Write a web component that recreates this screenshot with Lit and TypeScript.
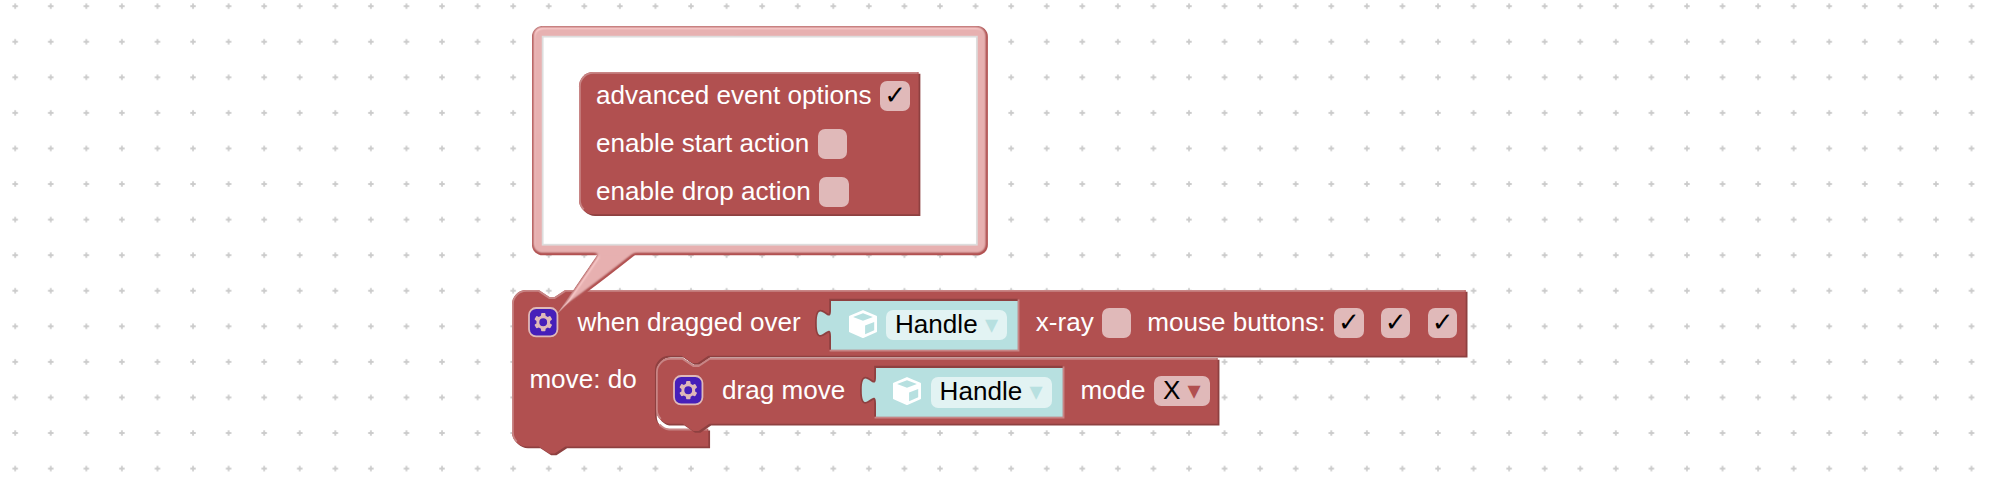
import { LitElement, html, css } from "lit";
import { customElement, property } from "lit/decorators.js";

const SCALE = 1.778;
const MAIN = "#b15050";
const DARK = "#8e4040";
const LIGHT = "#c88585";
const TAB = "c 0,-10 -8,8 -8,-7.5 s 8,2.5 8,-7.5";

const GEAR =
  "m4.203,7.296 0,1.368 -0.92,0.677 -0.11,0.41 0.9,1.559 0.41,0.11 1.043,-0.457 1.187,0.683 0.127,1.134 0.3,0.3 1.8,0 0.3,-0.299 0.127,-1.138 1.185,-0.682 1.046,0.458 0.409,-0.11 0.9,-1.559 -0.11,-0.41 -0.92,-0.677 0,-1.366 0.92,-0.677 0.11,-0.41 -0.9,-1.559 -0.409,-0.109 -1.046,0.458 -1.185,-0.682 -0.127,-1.138 -0.3,-0.299 -1.8,0 -0.3,0.3 -0.126,1.135 -1.187,0.682 -1.043,-0.457 -0.41,0.11 -0.899,1.559 0.108,0.409z";

@customElement("block-outline")
class BlockOutline extends LitElement {
  @property() path = "";
  @property() light = "";
  static styles = css`
    :host { position: absolute; inset: 0; }
    svg { display: block; overflow: visible; width: 1px; height: 1px; }
  `;
  render() {
    return html`<svg>
      <g transform="scale(${SCALE})">
        <path d=${this.path} fill=${DARK} transform="translate(1,1)"></path>
        <path d=${this.path} fill=${MAIN}></path>
        <path d=${this.light} fill="none" stroke=${LIGHT} stroke-width="1"></path>
      </g>
    </svg>`;
  }
}

@customElement("gear-icon")
class GearIcon extends LitElement {
  static styles = css`
    :host { display: block; width: 28.45px; height: 28.45px; flex: none; }
    svg { display: block; width: 100%; height: 100%; overflow: visible; opacity: 0.6; }
  `;
  render() {
    return html`<svg viewBox="0 0 16 16">
      <rect width="16" height="16" rx="4" fill="#00f" stroke="#fff"></rect>
      <path d=${GEAR} fill="#fff"></path>
      <circle cx="8" cy="8" r="2.7" fill="#00f" stroke="#fff"></circle>
    </svg>`;
  }
}

@customElement("check-field")
class CheckField extends LitElement {
  @property({ type: Boolean }) on = false;
  static styles = css`
    :host {
      display: block; flex: none; box-sizing: border-box;
      width: 29.4px; height: 30.3px; border-radius: 7.1px;
      background: rgba(255, 255, 255, 0.6); color: #000;
      text-align: center; font: 26.08px/28px "Liberation Sans", "DejaVu Sans", sans-serif;
    }
  `;
  render() {
    return html`${this.on ? "✓" : ""}`;
  }
}

@customElement("mesh-block")
class MeshBlock extends LitElement {
  static styles = css`
    :host { display: block; position: relative; flex: none; width: 187.4px; height: 48.8px; white-space: normal; }
    .shape { position: absolute; left: 0; top: 0; width: 1px; height: 1px; overflow: visible; }
    .row { position: relative; display: flex; padding: 9.2px 0 0 17.8px; }
    .cube { width: 28px; height: 28px; flex: none; margin-right: 9.2px; overflow: visible; }
    .field {
      display: flex; box-sizing: border-box; width: 121px; height: 30.3px; padding-left: 9px;
      border-radius: 7.1px; background: rgba(255, 255, 255, 0.6); color: #000;
      font: 26.08px/29.6px "Liberation Sans", "DejaVu Sans", sans-serif;
      white-space: pre;
    }
    .arrow { color: #b7e0e0; }
  `;
  render() {
    return html`
      <svg class="shape">
        <g transform="scale(${SCALE})">
          <path d="M 105,-0.2 H 0 V 5 c 0,10 -8,-8 -8,7.5 s 8,-2.5 8,7.5 V 27.4" fill="none" stroke=${DARK} stroke-width="2"></path>
          <path d="M 105.5,-0.8 V 27.9 H -0.8" fill="none" stroke=${LIGHT} stroke-width="1"></path>
          <path d="M 0,0 H 105 V 27.4 H 0 V 20 ${TAB} z" fill="#b7e0e0"></path>
        </g>
      </svg>
      <div class="row">
        <svg class="cube" viewBox="0 0 28 28">
          <path fill="#fff" stroke="#fff" stroke-width="2" stroke-linejoin="round" d="M14,1.1 L27,6.7 V21.4 L14,27 L1,21.4 V6.7 Z"></path>
          <path fill="#b7e0e0" d="M14,3.2 L23.9,6.9 L14,10.8 L4.1,6.9 Z M25.2,12 V20.2 L16.1,24.2 V15.6 Z"></path>
        </svg>
        <div class="field">Handle <span class="arrow">▾</span></div>
      </div>`;
  }
}

@customElement("app-root")
class AppRoot extends LitElement {
  static styles = css`
    :host {
      display: block; position: relative; width: 2000px; height: 484px; overflow: hidden;
      background: #fff; color: #fff; font: 26.08px/29px "Liberation Sans", "DejaVu Sans", sans-serif;
    }
    .layer { position: absolute; left: 0; top: 0; width: 2000px; height: 484px; }
    .block { position: absolute; }
    .event { left: 512px; top: 290.4px; width: 956px; }
    .drag { left: 656.4px; top: 358px; width: 564px; }
    .options { left: 578.7px; top: 72.4px; width: 342px; }
    .row { position: relative; display: flex; align-items: flex-start; white-space: pre; }
    .event .row { padding: 17.6px 0 0 17.4px; }
    .drag .row { padding: 17.6px 0 0 17.6px; }
    .event .row.statement { padding: 15.6px 0 0 17.4px; }
    .options .row { height: 48px; box-sizing: border-box; padding: 8.6px 0 0 17.4px; }
    .label { margin-top: -0.2px; flex: none; }
    .drag .label { margin-top: 0.2px; }
    .row .when { margin-left: 19.6px; width: 234.8px; }
    .row .dragmove { margin-left: 19.6px; width: 134.8px; }
    .row mesh-block { margin: -7.4px 17.4px 0 18.8px; }
    .xray { width: 66px; }
    .mouse { margin-left: 16px; width: 187px; }
    .next { margin-left: 17.5px; }
    .mode { width: 73.5px; }
    .drop {
      display: flex; box-sizing: border-box; width: 56px; height: 30.3px; padding-left: 9px;
      background: rgba(255, 255, 255, 0.6); border-radius: 7.1px; color: #000; line-height: 29.4px;
    }
    .tri { color: #b15050; }
    .options check-field { margin-left: 8.8px; }
  `;

  render() {
    const s = 80.4;
    const eventPath = `M 0,8 A 8,8 0 0,1 8,0 H 15 l 6,4 3,0 6,-4 H 536.4 V 37 H ${s + 30} l -6,4 -3,0 -6,-4 h -7 a 8,8 0 0,0 -8,8 v 25 a 8,8 0 0,0 8,8 H ${s + 30} V 88 H 30 l -6,4 -3,0 -6,-4 H 8 a 8,8 0 0,1 -8,-8 z`;
    const eventLight = `M 2.7,85.3 A 7.5,7.5 0 0,1 0.5,80 V 8 A 7.5,7.5 0 0,1 8,0.5 H 15 l 6,4 3,0 6,-4 H 535.9 M ${s + 2.7},75.7 A 8.5,8.5 0 0,0 ${s + 8},78.5 H ${s + 29.5}`;
    const dragPath =
      "M 0,8 A 8,8 0 0,1 8,0 H 15 l 6,4 3,0 6,-4 H 315.9 V 37 H 30 l -6,4 -3,0 -6,-4 H 8 a 8,8 0 0,1 -8,-8 z";
    const dragLight =
      "M 2.7,34.3 A 7.5,7.5 0 0,1 0.5,29 V 8 A 7.5,7.5 0 0,1 8,0.5 H 15 l 6,4 3,0 6,-4 H 315.4";
    const optPath = "M 0,8 A 8,8 0 0,1 8,0 H 191 V 80 H 8 a 8,8 0 0,1 -8,-8 z";
    const optLight = "M 2.7,77.3 A 7.5,7.5 0 0,1 0.5,72 V 8 A 7.5,7.5 0 0,1 8,0.5 H 190.5";

    return html`
      <svg class="layer">
        <defs>
          <pattern id="grid" width="35.57" height="35.57" patternUnits="userSpaceOnUse" x="-2.6" y="-11.6">
            <path d="M 15.1,17.8 h 5.4 M 17.8,15.1 v 5.4" stroke="#ccc" stroke-width="1.778"></path>
          </pattern>
        </defs>
        <rect width="2000" height="484" fill="url(#grid)"></rect>
      </svg>

      <div class="block event">
        <block-outline .path=${eventPath} .light=${eventLight}></block-outline>
        <div class="row">
          <gear-icon></gear-icon>
          <div class="label when">when dragged over</div>
          <mesh-block></mesh-block>
          <div class="label xray">x-ray</div>
          <check-field></check-field>
          <div class="label mouse">mouse buttons:</div>
          <check-field on></check-field>
          <check-field class="next" on></check-field>
          <check-field class="next" on></check-field>
        </div>
        <div class="row statement"><div class="label">move: do</div></div>
      </div>

      <div class="block drag">
        <block-outline .path=${dragPath} .light=${dragLight}></block-outline>
        <div class="row">
          <gear-icon></gear-icon>
          <div class="label dragmove">drag move</div>
          <mesh-block></mesh-block>
          <div class="label mode">mode</div>
          <div class="drop">X <span class="tri">▾</span></div>
        </div>
      </div>

      <svg class="layer">
        <defs>
          <filter id="emboss" x="-10%" y="-10%" width="120%" height="120%">
            <feGaussianBlur in="SourceAlpha" stdDeviation="1" result="blur"></feGaussianBlur>
            <feSpecularLighting in="blur" surfaceScale="1" specularConstant="0.5" specularExponent="10" lighting-color="white" result="specOut">
              <fePointLight x="-5000" y="-10000" z="20000"></fePointLight>
            </feSpecularLighting>
            <feComposite in="specOut" in2="SourceAlpha" operator="in" result="specOut"></feComposite>
            <feComposite in="SourceGraphic" in2="specOut" operator="arithmetic" k1="0" k2="1" k3="1" k4="0"></feComposite>
          </filter>
        </defs>
        <g transform="translate(532,26) scale(${SCALE})">
          <g filter="url(#emboss)" fill=${MAIN}>
            <path d="M 40,124 Q 27,143 14.4,161.6 Q 34,148 64,124 z"></path>
            <rect width="256.4" height="129" rx="6"></rect>
          </g>
          <rect x="6" y="6" width="244.2" height="117" fill="#fff" stroke="#ddd"></rect>
        </g>
      </svg>

      <div class="block options">
        <block-outline .path=${optPath} .light=${optLight}></block-outline>
        <div class="row"><div class="label">advanced event options</div><check-field on></check-field></div>
        <div class="row"><div class="label">enable start action</div><check-field></check-field></div>
        <div class="row"><div class="label">enable drop action</div><check-field></check-field></div>
      </div>
    `;
  }
}
